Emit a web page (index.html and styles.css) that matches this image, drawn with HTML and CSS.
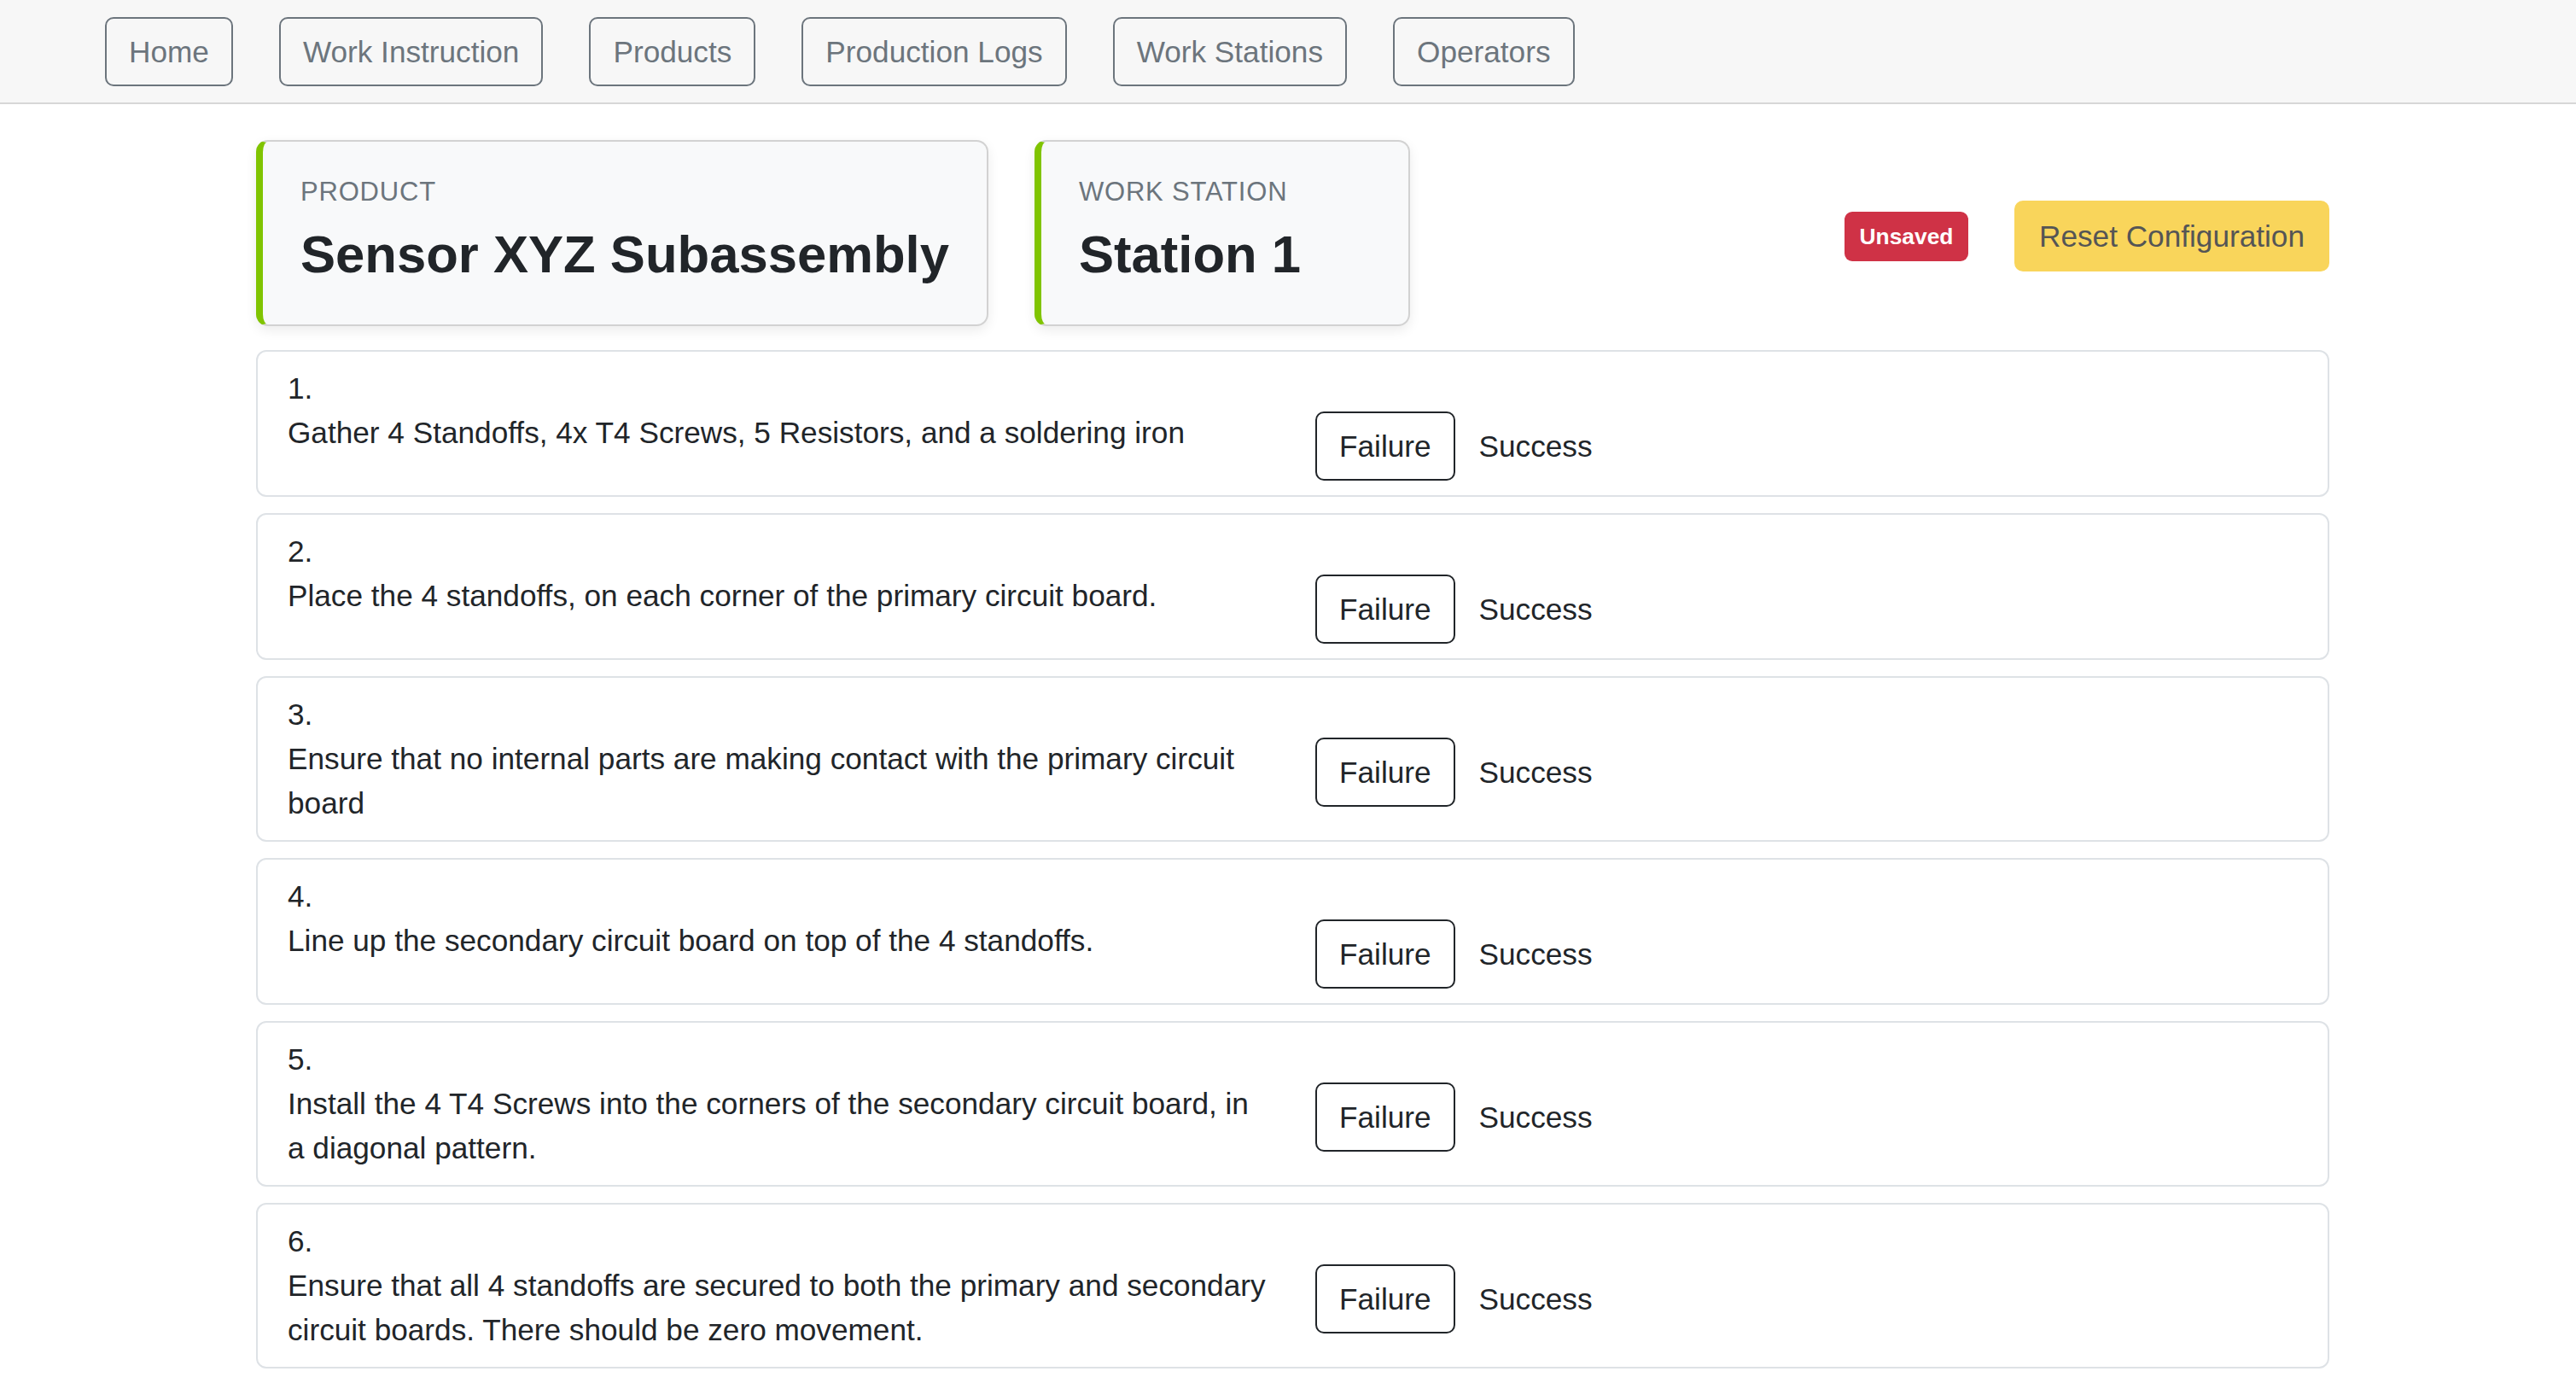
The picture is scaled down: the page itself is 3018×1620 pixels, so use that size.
FILE: index.html
```html
<!DOCTYPE html>
<html lang="en">
<head>
<meta charset="utf-8">
<title>Work Instruction</title>
<link rel="stylesheet" href="styles.css">
</head>
<body>
<nav class="topnav">
  <a class="nav-btn" href="#">Home</a>
  <a class="nav-btn" href="#">Work Instruction</a>
  <a class="nav-btn" href="#">Products</a>
  <a class="nav-btn" href="#">Production Logs</a>
  <a class="nav-btn" href="#">Work Stations</a>
  <a class="nav-btn" href="#">Operators</a>
</nav>
<main class="page">
  <div class="header-row">
    <div class="info-group">
      <div class="info-card">
        <div class="info-label">PRODUCT</div>
        <div class="info-title">Sensor XYZ Subassembly</div>
      </div>
      <div class="info-card">
        <div class="info-label">WORK STATION</div>
        <div class="info-title">Station 1</div>
      </div>
    </div>
    <div class="action-group">
      <span class="badge">Unsaved</span>
      <button class="reset-btn">Reset Configuration</button>
    </div>
  </div>
  <div class="steps">
    <div class="step">
      <div class="step-num">1.</div>
      <div class="step-row">
        <div class="step-text">Gather 4 Standoffs, 4x T4 Screws, 5 Resistors, and a soldering iron</div>
        <div class="step-actions"><button class="btn-fail">Failure</button><button class="btn-ok">Success</button></div>
      </div>
    </div>
    <div class="step">
      <div class="step-num">2.</div>
      <div class="step-row">
        <div class="step-text">Place the 4 standoffs, on each corner of the primary circuit board.</div>
        <div class="step-actions"><button class="btn-fail">Failure</button><button class="btn-ok">Success</button></div>
      </div>
    </div>
    <div class="step">
      <div class="step-num">3.</div>
      <div class="step-row">
        <div class="step-text">Ensure that no internal parts are making contact with the primary circuit board</div>
        <div class="step-actions"><button class="btn-fail">Failure</button><button class="btn-ok">Success</button></div>
      </div>
    </div>
    <div class="step">
      <div class="step-num">4.</div>
      <div class="step-row">
        <div class="step-text">Line up the secondary circuit board on top of the 4 standoffs.</div>
        <div class="step-actions"><button class="btn-fail">Failure</button><button class="btn-ok">Success</button></div>
      </div>
    </div>
    <div class="step">
      <div class="step-num">5.</div>
      <div class="step-row">
        <div class="step-text">Install the 4 T4 Screws into the corners of the secondary circuit board, in a diagonal pattern.</div>
        <div class="step-actions"><button class="btn-fail">Failure</button><button class="btn-ok">Success</button></div>
      </div>
    </div>
    <div class="step">
      <div class="step-num">6.</div>
      <div class="step-row">
        <div class="step-text">Ensure that all 4 standoffs are secured to both the primary and secondary circuit boards. There should be zero movement.</div>
        <div class="step-actions"><button class="btn-fail">Failure</button><button class="btn-ok">Success</button></div>
      </div>
    </div>
  </div>
</main>
</body>
</html>
```
FILE: styles.css
```css
* { box-sizing: border-box; }

body {
  margin: 0;
  font-family: "Liberation Sans", Arial, sans-serif;
  font-size: 35.2px;
  line-height: 52px;
  color: #212529;
  background: #ffffff;
}

.topnav {
  display: flex;
  gap: 54px;
  padding: 20px 0 19px 123px;
  background: #f7f7f7;
  border-bottom: 2px solid #d7d7d7;
}

.nav-btn {
  display: inline-block;
  height: 81px;
  padding: 0 26px;
  line-height: 77px;
  border: 2px solid #6c757d;
  border-radius: 10px;
  color: #6c757d;
  text-decoration: none;
  font-size: 35.2px;
}

.page {
  padding: 42px 289px 20px 300px;
}

.header-row {
  display: flex;
  align-items: center;
  justify-content: space-between;
  margin-bottom: 28px;
}

.info-group {
  display: flex;
  gap: 54px;
}

.info-card {
  min-width: 440px;
  height: 218px;
  padding: 36px 44px 0 44px;
  background: #f8f9fa;
  border: 2px solid #d2d2d2;
  border-left: 8px solid #80c400;
  border-radius: 14px;
  box-shadow: 0 5px 14px rgba(0, 0, 0, 0.08);
}

.info-label {
  font-size: 31px;
  line-height: 46px;
  letter-spacing: 0.8px;
  color: #6c757d;
}

.info-title {
  margin-top: 13px;
  font-size: 61.6px;
  line-height: 74px;
  font-weight: bold;
  color: #212529;
}

.action-group {
  display: flex;
  align-items: center;
  gap: 54px;
  padding-top: 7px;
}

.badge {
  display: inline-block;
  height: 58px;
  padding: 0 17.5px;
  line-height: 58px;
  font-size: 26.4px;
  font-weight: bold;
  color: #ffffff;
  background: #cf3246;
  border-radius: 9px;
}

.reset-btn {
  height: 83px;
  padding: 0 27px;
  font-family: inherit;
  font-size: 35.2px;
  color: #555555;
  background: #f9d55b;
  border: 2px solid #f9d55b;
  border-radius: 10px;
}

.steps {
  display: flex;
  flex-direction: column;
  gap: 19px;
}

.step {
  padding: 17px 35px;
  background: #ffffff;
  border: 2px solid #dee2e6;
  border-radius: 12px;
}

.step-num {
  line-height: 52px;
}

.step-row {
  display: grid;
  grid-template-columns: 1151px 1fr;
  column-gap: 53px;
  align-items: start;
}

.step-text {
  line-height: 52px;
}

.step-actions {
  display: flex;
  padding-top: 1px;
}

.btn-fail,
.btn-ok {
  height: 81px;
  padding: 0 26px;
  font-family: inherit;
  font-size: 35.2px;
  color: #212529;
  background: transparent;
  border: 2px solid transparent;
  border-radius: 10px;
}

.btn-fail {
  border-color: #212529;
}
```
